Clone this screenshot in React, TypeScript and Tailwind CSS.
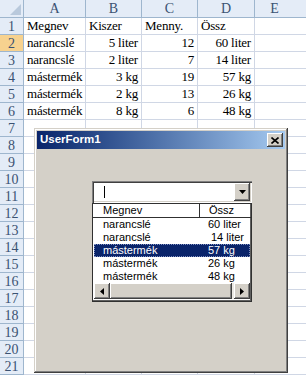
import React from "react";

const serif = { fontFamily: '"Liberation Serif", "Times New Roman", serif' };
const sans = { fontFamily: '"Liberation Sans", Tahoma, Arial, sans-serif' };

type Cell = { t: string; r?: boolean };
const data: Cell[][] = [
  [{ t: "Megnev" }, { t: "Kiszer" }, { t: "Menny." }, { t: "Össz" }],
  [{ t: "narancslé" }, { t: "5 liter", r: true }, { t: "12", r: true }, { t: "60 liter", r: true }],
  [{ t: "narancslé" }, { t: "2 liter", r: true }, { t: "7", r: true }, { t: "14 liter", r: true }],
  [{ t: "mástermék" }, { t: "3 kg", r: true }, { t: "19", r: true }, { t: "57 kg", r: true }],
  [{ t: "mástermék" }, { t: "2 kg", r: true }, { t: "13", r: true }, { t: "26 kg", r: true }],
  [{ t: "mástermék" }, { t: "8 kg", r: true }, { t: "6", r: true }, { t: "48 kg", r: true }],
];

const colW = ["w-[62px]", "w-[56px]", "w-[56px]", "w-[57px]"];

const listRows = [
  ["narancslé", "60 liter"],
  ["narancslé", "14 liter"],
  ["mástermék", "57 kg"],
  ["mástermék", "26 kg"],
  ["mástermék", "48 kg"],
];

const raised =
  "bg-[#d4d0c8] shadow-[inset_-1px_-1px_#404040,inset_1px_1px_#ffffff,inset_-2px_-2px_#808080,inset_2px_2px_#d4d0c8]";

function Sheet() {
  const rows = [];
  for (let i = 1; i <= 21; i++) {
    const cells = data[i - 1];
    rows.push(
      <div key={i} className="flex h-[17px]">
        <div
          className={`w-[24px] shrink-0 flex items-center justify-center border-r border-b border-[#9eb6ce] text-[14px] text-[#3b5272] ${
            i === 2 ? "bg-[#f7d28f]" : "bg-[#e4ecf7]"
          }`}
        >
          {i}
        </div>
        {colW.map((w, c) => {
          const cell = cells ? cells[c] : undefined;
          return (
            <div
              key={c}
              className={`${w} shrink-0 flex items-center border-r border-b border-[#d0d7e5] px-[3px] text-[13px] tracking-[-0.2px] text-black whitespace-nowrap overflow-hidden ${
                cell?.r ? "justify-end" : "justify-start"
              }`}
            >
              {cell?.t}
            </div>
          );
        })}
        <div className="flex-1 border-b border-[#d0d7e5]" />
      </div>
    );
  }
  return (
    <div className="flex flex-col bg-white" style={serif}>
      <div className="flex h-[18px]">
        <div className="w-[24px] shrink-0 relative border-r border-b border-[#9eb6ce] bg-[#e4ecf7]">
          <svg className="absolute right-[2px] bottom-[2px]" width="11" height="11" viewBox="0 0 11 11">
            <polygon points="11,0 11,11 0,11" fill="#b9c9dc" />
          </svg>
        </div>
        {["A", "B", "C", "D"].map((l, c) => (
          <div
            key={l}
            className={`${colW[c]} shrink-0 flex items-center justify-center border-r border-b border-[#9eb6ce] bg-[#e4ecf7] text-[14px] text-[#3b5272]`}
          >
            {l}
          </div>
        ))}
        <div className="flex-1 flex items-center justify-center border-b border-[#9eb6ce] bg-[#e4ecf7] text-[14px] text-[#3b5272] pr-[12px]">
          E
        </div>
      </div>
      {rows}
    </div>
  );
}

function Dialog() {
  return (
    <div
      className="absolute left-[34px] top-[128px] w-[254px] h-[245px] p-[3px] bg-[#d4d0c8] shadow-[inset_-1px_-1px_#404040,inset_1px_1px_#d4d0c8,inset_-2px_-2px_#808080,inset_2px_2px_#ffffff]"
      style={sans}
    >
      <div className="h-[18px] flex items-center justify-between pl-[3px] pr-[2px] bg-gradient-to-r from-[#0a246a] to-[#a6caf0]">
        <span className="text-white font-bold text-[11.5px] leading-none">UserForm1</span>
        <div className={`w-[16px] h-[14px] flex items-center justify-center ${raised}`}>
          <svg width="8" height="7" viewBox="0 0 8 7">
            <path d="M0.5 0.5 L7.5 6.5 M7.5 0.5 L0.5 6.5" stroke="#000" strokeWidth="1.6" />
          </svg>
        </div>
      </div>
      <div className="ml-[55px] mt-[32px] w-[160px] flex flex-col">
        {/* combo */}
        <div className="h-[22px] flex items-center bg-white p-[2px] shadow-[inset_1px_1px_#808080,inset_2px_2px_#404040,inset_-1px_-1px_#ffffff,inset_-2px_-2px_#d4d0c8]">
          <div className="flex-1 flex items-center pl-[10px]">
            <div className="w-[1px] h-[12px] bg-black" />
          </div>
          <div className={`w-[16px] h-[18px] flex items-center justify-center ${raised}`}>
            <svg width="7" height="4" viewBox="0 0 7 4">
              <polygon points="0,0 7,0 3.5,4" fill="#000" />
            </svg>
          </div>
        </div>
        {/* list */}
        <div className="h-[99px] flex flex-col bg-white border border-[#303030] shadow-[inset_-1px_-1px_#606060] overflow-hidden text-[11px] text-black leading-none">
          <div className="h-[14px] shrink-0 flex border-b border-[#303030]">
            <div className="w-[107px] border-r border-[#303030] pl-[10px] flex items-center">Megnev</div>
            <div className="flex-1 pl-[9px] flex items-center">Össz</div>
          </div>
          <div className="h-[65px] shrink-0 flex flex-col px-[1px] overflow-hidden">
            {listRows.map(([a, b], i) => {
              const sel = i === 2;
              return (
                <div
                  key={i}
                  className={`h-[13px] shrink-0 flex items-center ${
                    sel ? "bg-[#0a246a] text-white outline outline-1 outline-dotted outline-[#8090c0] -outline-offset-1" : ""
                  }`}
                >
                  <div className="w-[106px] pl-[9px]">{a}</div>
                  <div className={`flex-1 ${b === "14 liter" ? "pl-[11px]" : "pl-[8px]"}`}>{b}</div>
                </div>
              );
            })}
          </div>
          <div className="h-[16px] shrink-0 flex mx-[1px]">
            <div className={`w-[16px] h-[16px] flex items-center justify-center ${raised}`}>
              <svg width="4" height="7" viewBox="0 0 4 7">
                <polygon points="4,0 4,7 0,3.5" fill="#000" />
              </svg>
            </div>
            <div className={`w-[122px] h-[16px] ${raised}`} />
            <div className="flex-1 bg-[#ebe9e4]" />
            <div className={`w-[16px] h-[16px] flex items-center justify-center ${raised}`}>
              <svg width="4" height="7" viewBox="0 0 4 7">
                <polygon points="0,0 0,7 4,3.5" fill="#000" />
              </svg>
            </div>
          </div>
        </div>
      </div>
    </div>
  );
}

export default function App() {
  return (
    <div className="relative w-[306px] h-[376px] overflow-hidden bg-white">
      <Sheet />
      <Dialog />
    </div>
  );
}
